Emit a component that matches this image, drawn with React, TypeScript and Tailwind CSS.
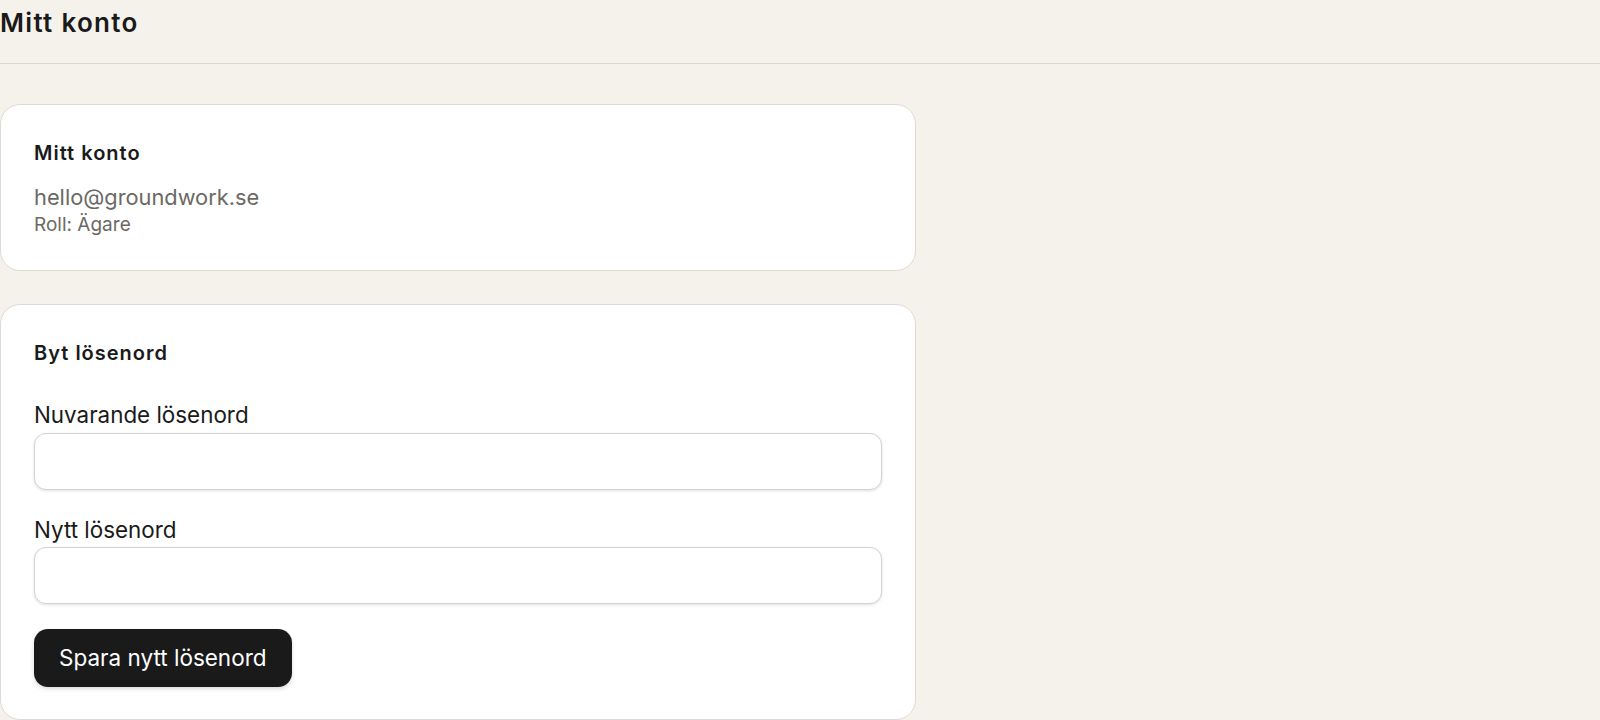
import React from "react";

export default function App() {
  return (
    <div
      className="min-h-[720px] w-full bg-[#f5f2ec] text-[#1a1a1a]"
      style={{ fontFamily: "Inter, 'Liberation Sans', sans-serif" }}
    >
      <header className="h-[64px] border-b border-[#dcd8d1] pt-[7px]">
        <h1 className="text-[26px] leading-[32px] font-semibold tracking-[0.05em]">Mitt konto</h1>
      </header>

      <main className="pt-[40px] w-[916px] flex flex-col gap-[33px]">
        <section className="rounded-[20px] border border-[#dedad3] bg-white px-[33px] pt-[34px] pb-[33px]">
          <h2 className="text-[20px] leading-[28px] font-semibold tracking-[0.05em]">Mitt konto</h2>
          <p className="mt-[16px] text-[21.8px] leading-[28px] text-[#6b6965]">hello@groundwork.se</p>
          <p className="mt-[2px] text-[19px] leading-[24px] text-[#6b6965]">Roll: Ägare</p>
        </section>

        <section className="rounded-[20px] border border-[#dedad3] bg-white px-[33px] pt-[34px] pb-[32px]">
          <h2 className="text-[20px] leading-[28px] font-semibold tracking-[0.05em]">Byt lösenord</h2>
          <div className="mt-[34px] flex flex-col">
            <label className="text-[22.4px] leading-[28px]">Nuvarande lösenord</label>
            <input
              type="password"
              className="mt-[4px] h-[57px] w-full rounded-[12px] border border-[#d6d3cd] bg-white px-4 shadow-[0_1px_3px_rgba(0,0,0,0.12)] outline-none"
            />
          </div>
          <div className="mt-[26px] flex flex-col">
            <label className="text-[22.4px] leading-[28px]">Nytt lösenord</label>
            <input
              type="password"
              className="mt-[3px] h-[57px] w-full rounded-[12px] border border-[#d6d3cd] bg-white px-4 shadow-[0_1px_3px_rgba(0,0,0,0.12)] outline-none"
            />
          </div>
          <button className="mt-[25px] h-[58px] rounded-[14px] bg-[#1a1a1a] px-[25px] text-[22.5px] text-white shadow-[0_2px_4px_rgba(0,0,0,0.15)]">
            Spara nytt lösenord
          </button>
        </section>
      </main>
    </div>
  );
}
